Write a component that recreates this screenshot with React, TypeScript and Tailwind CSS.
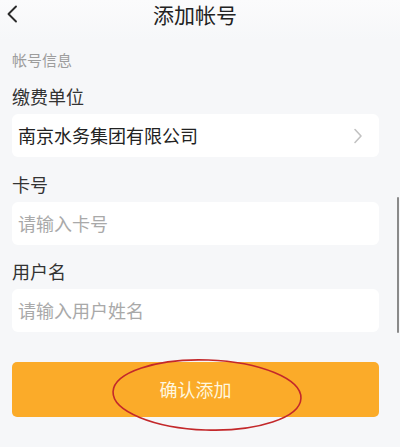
const font = { fontFamily: '"Noto Sans CJK SC", "Noto Sans", sans-serif' };

function Field({ label, top, children }: { label: string; top: string; children: React.ReactNode }) {
  return (
    <>
      <div className={`${top} text-[18px] leading-[24px] text-[#333333]`}>{label}</div>
      <div className="mt-[6px] h-[43px] rounded-[6px] bg-white flex items-center px-[6px]">
        {children}
      </div>
    </>
  );
}

export default function App() {
  return (
    <div
      className="relative w-[400px] h-[447px] overflow-hidden bg-[#f6f7f9]"
      style={font}
    >
      <header className="relative h-10 flex items-center justify-center bg-gradient-to-b from-[#fbfbfc] to-[#f6f7f9]">
        <svg className="absolute left-0 top-0" width="24" height="28" viewBox="0 0 24 28">
          <polyline points="16,6.5 8.5,14 16,21.5" fill="none" stroke="#2a2a2a" strokeWidth="1.9" strokeLinecap="round" strokeLinejoin="round" />
        </svg>
        <h1 className="text-[21px] leading-[28px] text-[#222222] -mt-[12px] ml-[-10px]">添加帐号</h1>
      </header>

      <main className="pl-3 pr-[21px]">
        <div className="mt-[10px] text-[15px] leading-[20px] text-[#9d9d9d]">帐号信息</div>

        <Field label="缴费单位" top="mt-[14px]">
          <span className="flex-1 text-[18px] text-[#222222]">南京水务集团有限公司</span>
          <svg className="mr-[10px]" width="10" height="16" viewBox="0 0 10 16">
            <polyline points="2,1.5 8,8 2,14.5" fill="none" stroke="#c2c2c2" strokeWidth="1.6" strokeLinecap="round" strokeLinejoin="round" />
          </svg>
        </Field>

        <Field label="卡号" top="mt-[15px]">
          <span className="text-[18px] text-[#a9a9a9]">请输入卡号</span>
        </Field>

        <Field label="用户名" top="mt-[14px]">
          <span className="text-[18px] text-[#a9a9a9]">请输入用户姓名</span>
        </Field>

        <button className="mt-[30px] w-full h-[55px] rounded-[5px] bg-[#fbab29] text-[18px] text-[#fff7df] flex items-center justify-center">
          确认添加
        </button>
      </main>

      <div className="absolute right-[1px] top-[197px] w-[2px] h-[136px] bg-[#8a8a8a] rounded-full" />

      <svg className="absolute left-0 top-0 pointer-events-none" width="400" height="447">
        <ellipse cx="207" cy="395" rx="94" ry="35" fill="none" stroke="#c3282b" strokeWidth="1.6" transform="rotate(2 207 395)" />
      </svg>
    </div>
  );
}
